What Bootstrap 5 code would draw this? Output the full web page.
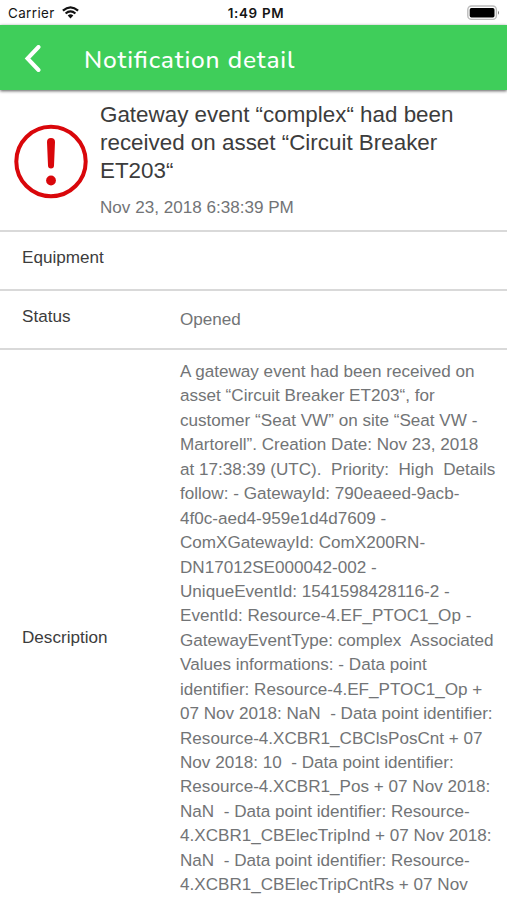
<!DOCTYPE html>
<html lang="en">
<head>
<meta charset="utf-8">
<meta name="viewport" content="width=device-width, initial-scale=1">
<title>Notification detail</title>
<link href="https://cdn.jsdelivr.net/npm/bootstrap@5.3.0/dist/css/bootstrap.min.css" rel="stylesheet">
<style>
  body { font-family: "Liberation Sans", Arial, sans-serif; font-size: 17.1px; color: #3c3c3c; height: 900px; overflow: hidden; }
  .status-bar { height: 25px; font-family: Inter, sans-serif; font-size: 13.4px; line-height: 27px; color: #151515; padding: 0 7px 0 8px; }
  .status-bar > * { flex: 1 1 0; }
  .carrier { letter-spacing: .4px; padding-top: 1px; }
  .wifi { margin-left: 7px; }
  .clock { font-weight: 600; letter-spacing: .7px; padding-left: 4px; }
  .app-bar { height: 65px; background: #3fce5a; box-shadow: 0 1px 3px rgba(0,0,0,.65); padding: 3px 0 0 24px; }
  .app-title { font-family: Nunito, Lato, sans-serif; font-size: 24.5px; font-weight: 500; font-feature-settings: "liga" 1; letter-spacing: .83px; line-height: 30px; margin-left: 42px; padding-top: 2px; }
  .summary { height: 142px; padding: 11px 14px 0; border-bottom: 2px solid #d9d9d9; }
  .alert-icon { margin-top: 23px; margin-right: 12px; }
  .event-title { font-size: 22.4px; line-height: 28px; white-space: pre; margin: 0; font-weight: 400; }
  .muted-text { color: #727476; }
  .event-date { line-height: 24px; margin-top: 11px; }
  .detail-row { border-bottom: 2px solid #d9d9d9; padding-left: 22px; }
  .detail-label { width: 158px; line-height: 24px; }
  .short-row { height: 59px; }
  .short-row .detail-label { padding-top: 14px; }
  .short-row .detail-value { padding-top: 17px; line-height: 24px; }
  .long-row { height: 576px; padding-top: 10px; border: 0; }
  .long-row .detail-label { margin-top: 266px; }
  .description { line-height: 24.43px; white-space: pre; }
</style>
<script src="https://cdn.jsdelivr.net/npm/bootstrap@5.3.0/dist/js/bootstrap.bundle.min.js"></script>
</head>
<body class="bg-white">
<div class="status-bar d-flex">
  <div class="d-flex align-items-center">
    <span class="carrier">Carrier</span>
    <svg class="wifi" width="17" height="13" viewBox="0 0 17 13" fill="none" stroke="#111" stroke-width="2.2"><path d="M.9 4.7Q8.5-2 16.1 4.7M3.6 7.5q4.9-4.3 9.8 0"/><path d="M5.7 9.6q2.8-2.5 5.6 0L8.5 12.4z" fill="#111" stroke="none"/></svg>
  </div>
  <div class="clock text-center">1:49 PM</div>
  <div class="d-flex justify-content-end align-items-center">
    <svg width="33" height="16" viewBox="0 0 33 16"><rect x=".8" y="1" width="28.6" height="13.4" rx="3.7" fill="#fff" stroke="#bcbcbc" stroke-width="1.4"/><rect x="2.7" y="3" width="24.8" height="9.4" rx="1.7"/><path d="M31 5.7q2 2 0 4z" fill="#777"/></svg>
  </div>
</div>
<header class="app-bar d-flex align-items-center position-relative text-white">
  <svg width="18" height="28" viewBox="0 0 18 28" fill="none" stroke="#fff" stroke-width="4" stroke-linecap="round" stroke-linejoin="miter"><path d="M14.5 2 3.5 13.500l11 11.500"/></svg>
  <div class="app-title text-nowrap">Notification detail</div>
</header>
<main>
  <section class="summary d-flex align-items-start">
    <svg class="alert-icon flex-shrink-0" width="74" height="75" viewBox="0 0 74 75"><circle cx="37" cy="37.5" r="34.7" fill="none" stroke="#d9070b" stroke-width="4"/><path d="M33 18q0-4 4-4t4 4l-1 23.500q0 3-3 3t-3-3z" fill="#d9070b"/><circle cx="37" cy="56.500" r="4.900" fill="#d9070b"/></svg>
    <div>
      <h1 class="event-title">Gateway event “complex“ had been
received on asset “Circuit Breaker
ET203“</h1>
      <div class="event-date muted-text">Nov 23, 2018 6:38:39 PM</div>
    </div>
  </section>
  <div class="detail-row short-row d-flex"><div class="detail-label">Equipment</div></div>
  <div class="detail-row short-row d-flex"><div class="detail-label">Status</div><div class="detail-value muted-text">Opened</div></div>
  <div class="detail-row long-row d-flex"><div class="detail-label flex-shrink-0">Description</div><div class="description muted-text">A gateway event had been received on
asset “Circuit Breaker ET203“, for
customer “Seat VW” on site “Seat VW -
Martorell”. Creation Date: Nov 23, 2018
at 17:38:39 (UTC).  Priority:  High  Details
follow: - GatewayId: 790eaeed-9acb-
4f0c-aed4-959e1d4d7609 -
ComXGatewayId: ComX200RN-
DN17012SE000042-002 -
UniqueEventId: 1541598428116-2 -
EventId: Resource-4.EF_PTOC1_Op -
GatewayEventType: complex  Associated
Values informations: - Data point
identifier: Resource-4.EF_PTOC1_Op +
07 Nov 2018: NaN  - Data point identifier:
Resource-4.XCBR1_CBClsPosCnt + 07
Nov 2018: 10  - Data point identifier:
Resource-4.XCBR1_Pos + 07 Nov 2018:
NaN  - Data point identifier: Resource-
4.XCBR1_CBElecTripInd + 07 Nov 2018:
NaN  - Data point identifier: Resource-
4.XCBR1_CBElecTripCntRs + 07 Nov</div></div>
</main>
</body>
</html>
